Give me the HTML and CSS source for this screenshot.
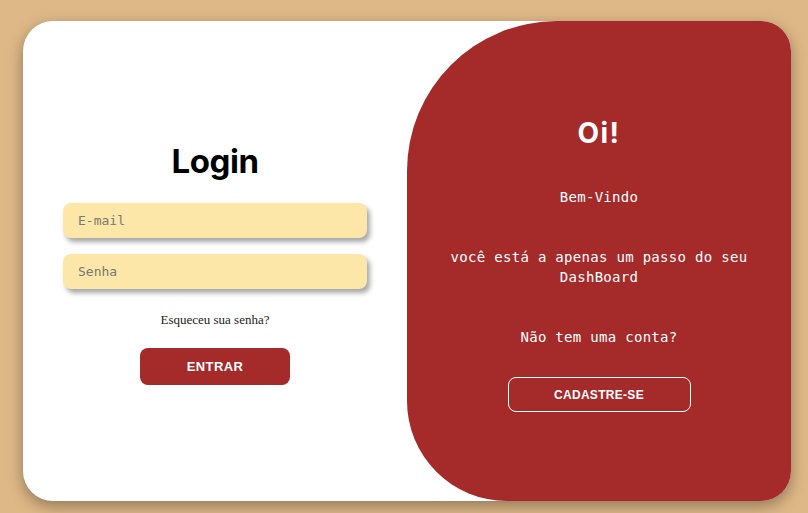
FILE: index.html
```html
<!DOCTYPE html>
<html lang="pt-BR">
<head>
<meta charset="utf-8">
<title>Login</title>
<link rel="stylesheet" href="styles.css">
</head>
<body>
<div class="card">
  <form class="login" onsubmit="return false">
    <h1 class="title">Login</h1>
    <input class="field field-first" type="email" placeholder="E-mail">
    <input class="field" type="password" placeholder="Senha">
    <a class="forgot" href="#">Esqueceu sua senha?</a>
    <button class="btn-enter" type="submit">ENTRAR</button>
  </form>
  <div class="panel">
    <h1 class="panel-title">Oi!</h1>
    <p class="panel-text">Bem-Vindo</p>
    <p class="panel-text">você está a apenas um passo do seu DashBoard</p>
    <p class="panel-text">Não tem uma conta?</p>
    <button class="btn-signup" type="button">CADASTRE-SE</button>
  </div>
</div>
</body>
</html>
```

FILE: styles.css
```css
* { box-sizing: border-box; }

html, body {
  margin: 0;
  height: 100%;
}

body {
  background: #deb887;
  padding: 21px 0 0 23px;
  overflow: hidden;
}

.card {
  width: 768px;
  height: 480px;
  background: #fff;
  border-radius: 30px;
  box-shadow: 0 5px 15px rgba(0, 0, 0, 0.35);
  overflow: hidden;
  display: flex;
}

.login {
  width: 384px;
  display: flex;
  flex-direction: column;
  align-items: center;
  padding: 120px 40px 0;
  margin: 0;
}

.title {
  font-family: Inter, "Noto Sans", sans-serif;
  font-weight: 700;
  font-size: 33px;
  line-height: 40px;
  margin: 0;
  color: #000;
  letter-spacing: -0.4px;
}

.field {
  width: 304px;
  height: 35px;
  border: none;
  outline: none;
  background: #fce6a8;
  border-radius: 8px;
  padding: 0 15px;
  font-family: "DejaVu Sans Mono", "Liberation Mono", monospace;
  font-size: 13px;
  color: #333;
  box-shadow: 3px 4px 5px rgba(0, 0, 0, 0.35);
  margin-top: 16px;
}

.field-first { margin-top: 22px; }

.field::placeholder { color: #7a7a70; }

.forgot {
  font-family: "Liberation Serif", serif;
  font-size: 13px;
  line-height: 15px;
  color: #222;
  text-decoration: none;
  margin-top: 23px;
}

.btn-enter {
  margin-top: 21px;
  width: 150px;
  height: 37px;
  background: #a52a2a;
  color: #fff;
  border: none;
  border-radius: 8px;
  font-family: "Liberation Sans", Arial, sans-serif;
  font-weight: 700;
  font-size: 13px;
  letter-spacing: 0.4px;
}

.panel {
  width: 384px;
  background: #a52a2a;
  border-radius: 150px 0 0 100px;
  display: flex;
  flex-direction: column;
  align-items: center;
  text-align: center;
  padding: 95px 30px 0;
  color: #fff;
}

.panel-title {
  font-family: Inter, "Noto Sans", sans-serif;
  font-weight: 700;
  font-size: 28px;
  line-height: 34px;
  letter-spacing: 1.5px;
  margin: 0 0 17px;
}

.panel-text {
  font-family: "DejaVu Sans Mono", "Liberation Mono", monospace;
  font-size: 14px;
  line-height: 20px;
  letter-spacing: 0.3px;
  margin: 20px 0;
}

.btn-signup {
  margin-top: 10px;
  width: 183px;
  height: 35px;
  background: transparent;
  color: #fff;
  border: 1px solid #fff;
  border-radius: 8px;
  font-family: "Liberation Sans", Arial, sans-serif;
  font-weight: 700;
  font-size: 12px;
  letter-spacing: 0.3px;
}
```
